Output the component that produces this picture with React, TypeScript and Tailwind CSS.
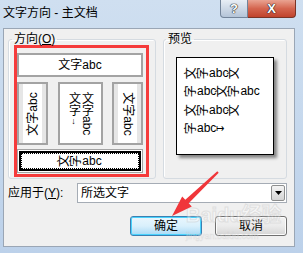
function R({ c }: { c: string }) {
  // CJK glyph laid on its side
  return <span className="inline-block -rotate-90">{c}</span>;
}

export default function App() {
  return (
    <div className="relative w-[303px] h-[253px] overflow-hidden bg-gradient-to-b from-[#cfdff0] to-[#bcd1ea] font-[family-name:'Liberation_Sans','Noto_Sans_CJK_SC',sans-serif] text-[12px] text-black">
      {/* Title bar */}
      <div className="flex h-[28px] pl-[3px] pr-[7px]">
        <div className="mt-[6px] leading-[14px] text-[12px] text-black">文字方向 - 主文档</div>
        <div className="ml-auto flex h-[18px]">
          <div className="flex w-[28px] items-center justify-center rounded-bl-[4px] border border-t-0 border-[#73849a] bg-gradient-to-b from-[#e8eef5] to-[#b4c4d8] text-[13px] font-bold leading-none text-white [text-shadow:0_0_1px_#222,0_0_1px_#222,0_0_1px_#222]">
            ?
          </div>
          <div className="flex w-[48px] items-center justify-center rounded-br-[4px] border border-t-0 border-l-0 border-[#7a3426] bg-gradient-to-b from-[#e9a392] via-[#d4654f] to-[#c0432c] text-[13px] font-bold leading-none text-white [text-shadow:0_0_1px_#222,0_0_1px_#222,0_0_1px_#222]">
            X
          </div>
        </div>
      </div>

      {/* Dialog body */}
      <div className="ml-[3px] h-[219px] w-[292px] border border-[#9aa6b5] bg-[#f0f0f0] pl-[4px] pr-[7px]">
        <div className="mt-[4px] flex gap-[7px]">
          {/* 方向 */}
          <fieldset className="h-[146px] w-[148px] rounded-[3px] border border-[#d5dbe1] shadow-[inset_1px_1px_0_#fff]">
            <legend className="ml-[3px] px-[2px] leading-[12px]">
              方向(<u>O</u>)
            </legend>
            <div className="ml-[5px] flex h-[132px] w-[135px] flex-col border-[3px] border-[#f53b3b] pt-[5px] pr-[3px] pb-[1px]">
              <div className="flex h-[24px] items-center justify-center border-2 border-[#a3a3a3] bg-white">
                文字abc
              </div>
              <div className="mt-[5px] flex h-[63px] justify-between">
                <div className="w-[31px] border-2 border-[#a3a3a3] bg-white">
                  <div className="flex h-full items-center justify-center overflow-hidden border-x-[4px] border-[#e6e6e6]">
                    <span className="inline-block -rotate-90 whitespace-nowrap">文字abc</span>
                  </div>
                </div>
                <div className="flex w-[45px] items-start justify-center gap-[1px] border-2 border-[#a3a3a3] bg-white pt-[8px]">
                  <div className="leading-[12px] whitespace-nowrap [writing-mode:vertical-rl]">
                    文字<span className="text-[9px] [text-orientation:upright]">↓</span>
                  </div>
                  <div className="leading-[12px] whitespace-nowrap [writing-mode:vertical-rl]">文字abc</div>
                </div>
                <div className="w-[31px] border-2 border-[#a3a3a3] bg-white">
                  <div className="flex h-full items-center justify-center overflow-hidden border-x-[4px] border-[#e6e6e6]">
                    <span className="inline-block rotate-90 whitespace-nowrap">文字abc</span>
                  </div>
                </div>
              </div>
              <div className="mt-[4px] h-[24px] border border-[#a3a3a3] bg-white p-[1px]">
                <div className="h-full border-2 border-black">
                  <div className="flex h-full items-center justify-center border border-dotted border-black leading-none">
                    <R c="文" />
                    <R c="字" />
                    abc
                  </div>
                </div>
              </div>
            </div>
          </fieldset>

          {/* 预览 */}
          <fieldset className="h-[146px] w-[124px] rounded-[3px] border border-[#d5dbe1] shadow-[inset_1px_1px_0_#fff]">
            <legend className="ml-[2px] px-[2px] leading-[12px]">预览</legend>
            <div className="mt-[12px] ml-[12px] h-[98px] w-[98px] border border-black bg-white pt-[6px] pl-[8px] leading-[18.3px] shadow-[3px_3px_3px_rgba(0,0,0,0.45)]">
              <div className="whitespace-nowrap">
                <R c="文" />
                <R c="字" />
                abc
                <R c="文" />
              </div>
              <div className="whitespace-nowrap">
                <R c="字" />
                abc
                <R c="文" />
                <R c="字" />
                abc
              </div>
              <div className="whitespace-nowrap">
                <R c="文" />
                <R c="字" />
                abc
                <R c="文" />
              </div>
              <div className="whitespace-nowrap">
                <R c="字" />
                abc<span className="text-[10px]">↦</span>
              </div>
            </div>
          </fieldset>
        </div>

        {/* 应用于 */}
        <div className="mt-[4px] flex h-[20px] items-center">
          <div className="w-[69px]">
            应用于(<u>Y</u>):
          </div>
          <div className="flex h-[20px] w-[210px] items-center border border-[#a5acb5] bg-white">
            <span className="pl-[3px]">所选文字</span>
            <div className="m-[1px] ml-auto flex h-[16px] w-[14px] items-center justify-center rounded-[2px] border border-[#8e8f8f] bg-gradient-to-b from-[#f4f4f4] to-[#d4d4d4]">
              <svg width="7" height="4" viewBox="0 0 7 4">
                <polygon points="0,0 7,0 3.5,4" fill="#000" />
              </svg>
            </div>
          </div>
        </div>

        {/* Buttons */}
        <div className="mt-[13px] flex justify-end gap-[13px]">
          <button className="flex h-[20px] w-[72px] items-center justify-center rounded-[3px] border border-[#3c7fb1] bg-gradient-to-b from-[#eaf6fd] via-[#d9f0fc] to-[#a7d9f5] shadow-[inset_0_0_0_1px_#48d2fd]">
            确定
          </button>
          <button className="flex h-[20px] w-[72px] items-center justify-center rounded-[3px] border border-[#707070] bg-gradient-to-b from-[#f2f2f2] via-[#ebebeb] to-[#d5d5d5] shadow-[inset_0_0_0_1px_#fcfcfc]">
            取消
          </button>
        </div>
      </div>

      {/* Watermark */}
      <div className="pointer-events-none absolute left-[186px] top-[204px] flex flex-col items-start opacity-40">
        <span className="text-[20px] font-bold leading-[22px] text-white [-webkit-text-stroke:1px_#c8c8c8]">Baidu经验</span>
        <span className="mt-[5px] text-[9px] leading-[10px] text-white [-webkit-text-stroke:0.5px_#c8c8c8]">jingyan.baidu.com</span>
      </div>

      {/* Red annotation arrow */}
      <svg className="pointer-events-none absolute left-0 top-0" width="303" height="253" viewBox="0 0 303 253">
        <polygon
          points="218.7,172.7 188.7,203.3 191.8,206.5 172,216 182.2,196.5 185.3,199.7 217.3,171.3"
          fill="#f0363a"
        />
      </svg>
    </div>
  );
}
